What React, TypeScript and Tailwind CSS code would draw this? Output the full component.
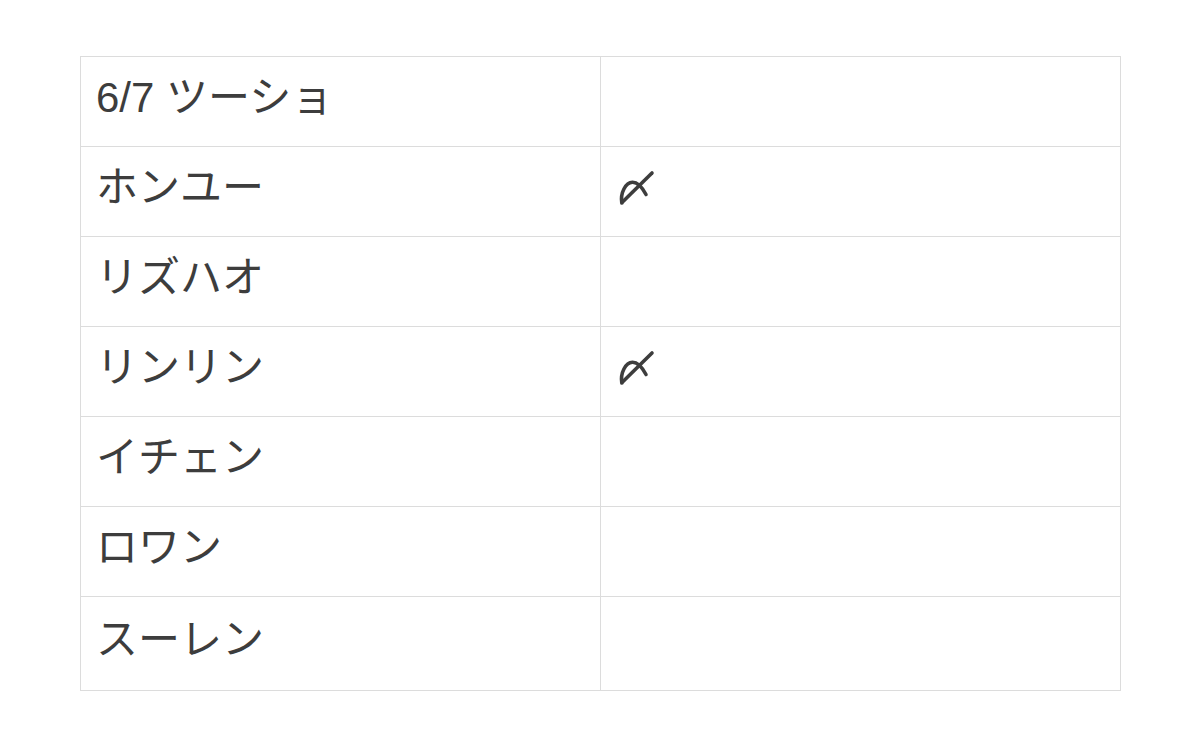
import React from "react";

const rows: { name: string; mark: boolean }[] = [
  { name: "6/7 ツーショ", mark: false },
  { name: "ホンユー", mark: true },
  { name: "リズハオ", mark: false },
  { name: "リンリン", mark: true },
  { name: "イチェン", mark: false },
  { name: "ロワン", mark: false },
  { name: "スーレン", mark: false },
];

const Mark = () => (
  <svg width="40" height="40" viewBox="0 0 40 40" fill="none" stroke="#3d3d3d" strokeWidth="3.6" strokeLinecap="round" strokeLinejoin="round" className="block">
    <path d="M4.8 35 C3.2 25 8.5 14.5 15.5 14.3 C21.5 14.2 25.5 20 29 26.5" />
    <path d="M35 5 L5.5 34" />
  </svg>
);

const App: React.FC = () => {
  return (
    <div
      className="w-[1200px] h-[750px] bg-white pt-[56px] pl-[80px]"
      style={{ fontFamily: '"Liberation Sans", "Noto Sans CJK JP", sans-serif' }}
    >
      <table className="w-[1041px] border-collapse table-fixed text-[42px] text-[#3d3d3d]">
        <tbody>
          {rows.map((row, i) => (
            <tr key={i} className={i === rows.length - 1 ? "h-[94px]" : "h-[90px]"}>
              <td className="border border-[#dcdcdc] pl-[15px] pr-[15px] pb-[8px] align-middle leading-none">
                {row.name}
              </td>
              <td className="border border-[#dcdcdc] pl-[16px] pr-[16px] pb-[8px] align-middle leading-none">
                {row.mark ? <Mark /> : ""}
              </td>
            </tr>
          ))}
        </tbody>
      </table>
    </div>
  );
};

export default App;
